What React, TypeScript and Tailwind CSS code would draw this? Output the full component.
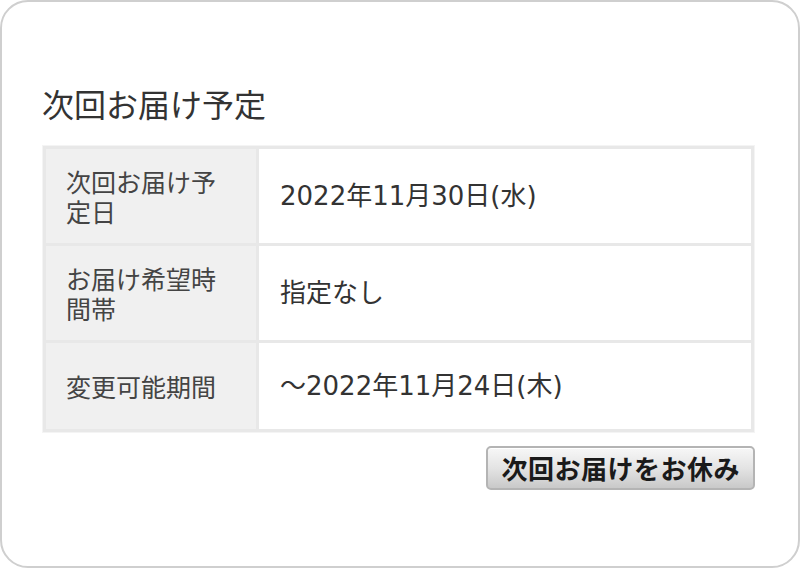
const rows = [
  { label: "次回お届け予定日", value: "2022年11月30日(水)" },
  { label: "お届け希望時間帯", value: "指定なし" },
  { label: "変更可能期間", value: "～2022年11月24日(木)" },
];

export default function App() {
  return (
    <div className="w-[800px] h-[568px] bg-white font-['DejaVu_Sans','Noto_Sans_CJK_JP',sans-serif]">
      <div className="w-full h-full border-2 border-[#cfcfcf] rounded-[28px] pl-[40px] pr-[43px] pt-[81px]">
        <h2 className="text-[32px] leading-[40px] text-[#333] font-['Noto_Sans_CJK_JP',sans-serif]">
          次回お届け予定
        </h2>
        <div className="mt-[22px] border border-[#f4f4f4]">
          <table className="w-full border-collapse border-[3px] border-[#e8e8e8]">
            <tbody>
              {rows.map((r) => (
                <tr key={r.label}>
                  <th className="w-[213px] bg-[#f0f0f0] border-[3px] border-[#e8e8e8] px-[20px] py-[17px] text-left align-middle font-normal text-[25px] leading-[30px] text-[#444] font-['Noto_Sans_CJK_JP',sans-serif]">
                    {r.label}
                  </th>
                  <td className="bg-white border-[3px] border-[#e8e8e8] pl-[21px] py-[28px] align-middle text-[26px] leading-[30px] text-[#333]">
                    {r.value}
                  </td>
                </tr>
              ))}
            </tbody>
          </table>
        </div>
        <div className="flex justify-end mt-[13px]">
          <button
            type="button"
            className="h-[44px] px-[13px] rounded-[5px] border-2 border-[#b4b4b4] bg-gradient-to-b from-[#f7f7f7] via-[#e4e4e4] to-[#c9c9c9] text-[26px] tracking-[0.5px] leading-[30px] font-bold text-[#1a1a1a] font-['Noto_Sans_CJK_JP',sans-serif] shadow-[inset_0_1px_0_#fff]"
          >
            次回お届けをお休み
          </button>
        </div>
      </div>
    </div>
  );
}
